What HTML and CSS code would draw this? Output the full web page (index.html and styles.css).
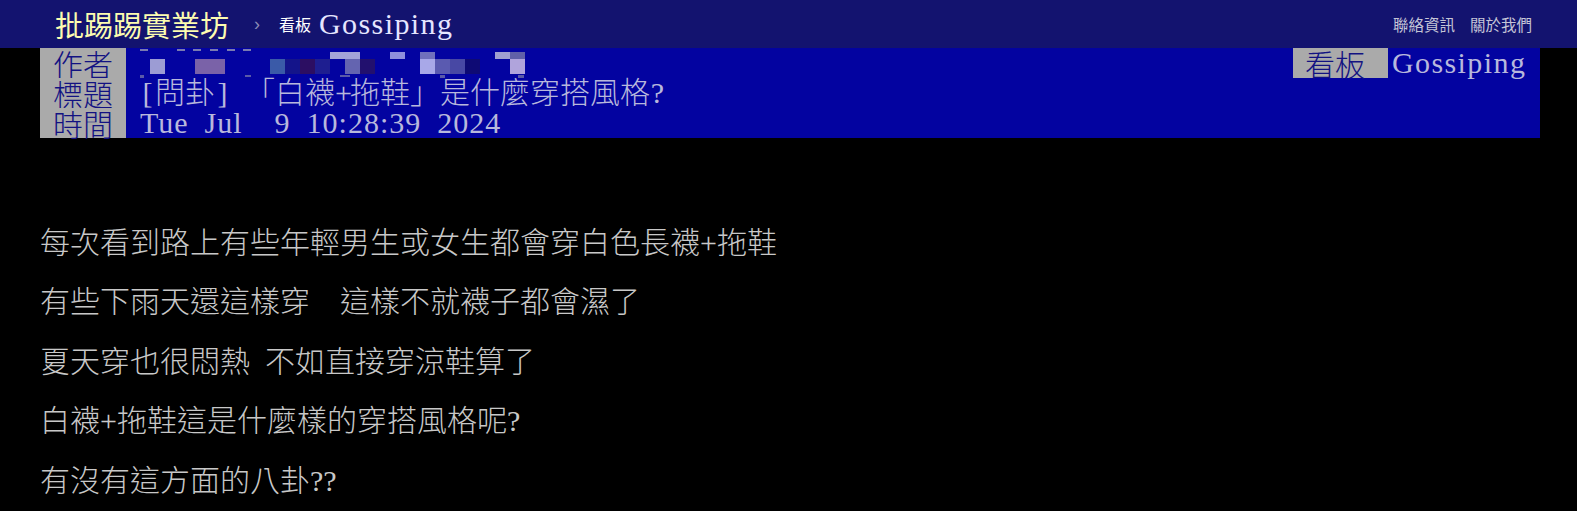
FILE: index.html
```html
<!DOCTYPE html>
<html lang="zh-Hant">
<head>
    <meta charset="UTF-8">
    <meta name="viewport" content="width=device-width, initial-scale=1.0">
    <title>[問卦] 「白襪+拖鞋」是什麼穿搭風格? - 看板 Gossiping - 批踢踢實業坊</title>
    <link rel="stylesheet" href="styles.css">
</head>
<body>
    <div id="topbar">
        <a class="logo" href="#">批踢踢實業坊</a>
        <span class="crumb-sep">›</span>
        <a class="board" href="#"><span class="board-label">看板</span><span class="board-name">Gossiping</span></a>
        <div class="top-links">
            <a href="#">聯絡資訊</a>
            <a href="#">關於我們</a>
        </div>
    </div>

    <div id="main-content">
        <div class="meta">
            <div class="meta-row">
                <span class="meta-tag">作者</span>
                <!-- author id is pixelated -->
                <span class="meta-value grow author">
                    <svg class="mosaic" width="400" height="30" viewBox="0 0 400 30">
                        <g fill="#7a7ab0">
                            <rect x="0" y="1" width="8" height="2"/>
                            <rect x="37" y="1" width="8" height="2"/>
                            <rect x="53" y="1" width="8" height="2"/>
                            <rect x="70" y="1" width="8" height="2"/>
                            <rect x="87" y="1" width="8" height="2"/>
                            <rect x="103" y="1" width="8" height="2"/>
                        </g>
                        <rect x="190" y="4" width="30" height="7" fill="#a4a4d8"/>
                        <rect x="250" y="4" width="15" height="7" fill="#9090dc"/>
                        <rect x="280" y="4" width="15" height="7" fill="#7070bc"/>
                        <rect x="355" y="4" width="15" height="7" fill="#a0a0d0"/>
                        <rect x="370" y="4" width="15" height="7" fill="#6060a8"/>
                        <rect x="10" y="11" width="15" height="15" fill="#9c9cd4"/>
                        <rect x="55" y="11" width="30" height="15" fill="#7a62a8"/>
                        <rect x="130" y="11" width="15" height="15" fill="#3a5aa8"/>
                        <rect x="145" y="11" width="15" height="15" fill="#14148a"/>
                        <rect x="160" y="11" width="15" height="15" fill="#2c0e62"/>
                        <rect x="175" y="11" width="15" height="15" fill="#1e1e90"/>
                        <rect x="205" y="11" width="15" height="15" fill="#6464b0"/>
                        <rect x="220" y="11" width="15" height="15" fill="#22106e"/>
                        <rect x="280" y="11" width="15" height="15" fill="#a8a8e8"/>
                        <rect x="295" y="11" width="15" height="15" fill="#5a5ab0"/>
                        <rect x="310" y="11" width="15" height="15" fill="#4848a4"/>
                        <rect x="325" y="11" width="15" height="15" fill="#0e0a74"/>
                        <rect x="370" y="11" width="15" height="15" fill="#b0a4dc"/>
                        <g fill="#5a5aa8">
                            <rect x="0" y="27" width="4" height="3"/>
                            <rect x="105" y="27" width="6" height="2"/>
                            <rect x="200" y="27" width="10" height="2"/>
                            <rect x="300" y="27" width="5" height="3"/>
                            <rect x="378" y="27" width="6" height="3"/>
                        </g>
                    </svg>
                </span>
                <span class="meta-tag board-tag">看板</span>
                <span class="meta-value board-value">Gossiping</span>
            </div>
            <div class="meta-row">
                <span class="meta-tag">標題</span>
                <span class="meta-value grow"><span class="hw">[</span>問卦<span class="hw">]</span> 「白襪<span class="hw">+</span>拖鞋」是什麼穿搭風格<span class="hw">?</span></span>
            </div>
            <div class="meta-row">
                <span class="meta-tag">時間</span>
                <span class="meta-value grow date">Tue Jul  9 10:28:39 2024</span>
            </div>
        </div>

        <div class="article">
            <p class="line">每次看到路上有些年輕男生或女生都會穿白色長襪+拖鞋</p>
            <p class="line">有些下雨天還這樣穿  這樣不就襪子都會濕了</p>
            <p class="line">夏天穿也很悶熱 不如直接穿涼鞋算了</p>
            <p class="line">白襪+拖鞋這是什麼樣的穿搭風格呢?</p>
            <p class="line">有沒有這方面的八卦??</p>
        </div>
    </div>
</body>
</html>
```

FILE: styles.css
```css
body {
    margin: 0;
    padding: 0;
    background-color: #000;
    font-family: "Liberation Serif", "Noto Sans CJK TC", serif;
    overflow: hidden;
}

a {
    text-decoration: none;
    color: inherit;
}

/* top navigation */
#topbar {
    height: 48px;
    background-color: #13136f;
    display: flex;
    align-items: center;
    padding: 0 45px 0 55px;
}

.logo {
    font-family: "Noto Sans CJK TC", sans-serif;
    font-size: 29px;
    color: #fcfcb0;
}

.crumb-sep {
    font-family: "Liberation Sans", sans-serif;
    font-size: 18px;
    color: #8a8ab4;
    margin: 0 19px 0 25px;
}

.board {
    display: flex;
    align-items: center;
}

.board-label {
    font-family: "Noto Sans CJK TC", sans-serif;
    font-size: 16px;
    color: #fff;
    margin-right: 8px;
}

.board-name {
    font-size: 30px;
    color: #e6e6ff;
    letter-spacing: 1.4px;
}

.top-links {
    margin-left: auto;
    display: flex;
    gap: 15px;
    font-family: "Noto Sans CJK TC", sans-serif;
    font-size: 15.5px;
    color: #c4c4d6;
}

/* article header */
#main-content {
    margin: 0 37px 0 40px;
}

.meta {
    background-color: #0303a0;
    font-size: 30px;
    line-height: 30px;
    color: #b8b8dc;
}

.meta-row {
    display: flex;
    height: 30px;
}

.meta-tag {
    background-color: #aaa;
    color: #121282;
    padding: 0 13px;
    font-family: "Noto Sans CJK TC", sans-serif;
    font-weight: 300;
}

.meta-value {
    padding-left: 14px;
    white-space: pre;
    word-spacing: 0.25em;
}

.meta-value.grow {
    flex: 1;
    font-weight: 300;
}

.meta-value.author {
    display: flex;
    white-space: normal;
}

.meta-value.date {
    letter-spacing: 1px;
}

/* half-width cell for latin marks between CJK */
.hw {
    display: inline-block;
    width: 0.5em;
    text-align: center;
}

.mosaic {
    display: block;
}

.board-tag {
    padding: 0 23px 0 12px;
}

.board-value {
    width: 135px;
    padding: 0 13px 0 4px;
    letter-spacing: 1.4px;
}

/* article body */
.article {
    padding-top: 90px;
    font-size: 30px;
    font-weight: 300;
    color: #c8c8c8;
    word-spacing: 0.25em;
}

.line {
    margin: 0 0 29.7px 0;
    height: 29.7px;
    line-height: 29.7px;
    white-space: pre;
}
```
